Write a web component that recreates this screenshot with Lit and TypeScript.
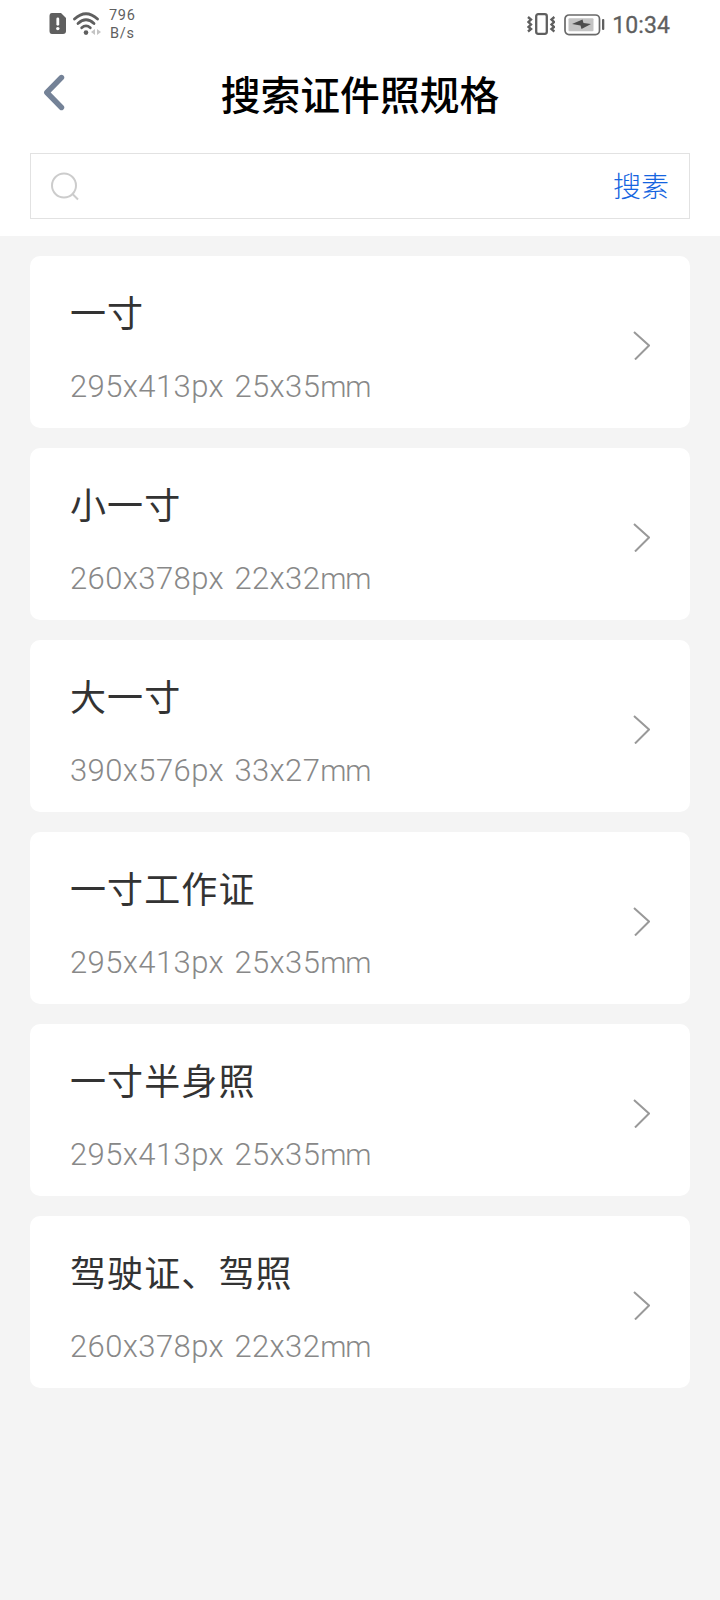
import { LitElement, html, css } from "lit";
import { customElement, property } from "lit/decorators.js";

interface PhotoSpec {
  name: string;
  size: string;
}

const SPECS: PhotoSpec[] = [
  { name: "一寸", size: "295x413px 25x35" },
  { name: "小一寸", size: "260x378px 22x32" },
  { name: "大一寸", size: "390x576px 33x27" },
  { name: "一寸工作证", size: "295x413px 25x35" },
  { name: "一寸半身照", size: "295x413px 25x35" },
  { name: "驾驶证、驾照", size: "260x378px 22x32" },
];

@customElement("status-bar")
export class StatusBar extends LitElement {
  static styles = css`
    :host {
      display: flex;
      justify-content: space-between;
      height: 50px;
      padding: 0 50px 0 49px;
      box-sizing: border-box;
      font-family: Roboto, sans-serif;
      color: #5f5f5f;
    }
    .side {
      display: flex;
      align-items: flex-start;
    }
    .sim { margin-top: 12px; }
    .wifi { margin: 12px 0 0 6px; }
    .rate {
      margin: 7px 0 0 8px;
      font-size: 14.5px;
      line-height: 18px;
      letter-spacing: 0.7px;
      text-align: center;
    }
    .vibrate { margin-top: 13px; }
    .battery { margin: 14px 0 0 9px; }
    .time {
      margin: 11px 0 0 7px;
      font-size: 23px;
      line-height: 29px;
      letter-spacing: 0.1px;
      -webkit-text-stroke: 0.3px #5f5f5f;
    }
  `;

  render() {
    return html`
      <div class="side">
        <svg class="sim" width="18" height="23" viewBox="0 0 18 23">
          <path d="M3 1H12L17 6V19Q17 22 14 22H3Q.5 22 .5 19V4Q.5 1 3 1Z" fill="#5f5f5f" />
          <path d="M8.8 6.8V12.3" stroke="#fff" stroke-width="2.8" stroke-linecap="round" />
          <circle cx="8.8" cy="16.6" r="1.7" fill="#fff" />
        </svg>
        <svg class="wifi" width="28" height="24" viewBox="0 0 28 24">
          <g fill="none" stroke="#5f5f5f" stroke-width="2.8" stroke-linecap="round">
            <path d="M1.5 7Q13 -3.5 24.5 7" />
            <path d="M5 11.5Q13 4 21 11.5" />
            <path d="M8.7 15.8Q13 12 17.3 15.8" />
          </g>
          <circle cx="13" cy="20.6" r="2.3" fill="#5f5f5f" />
          <path d="M22 17V23L18 20ZM24 17V23L28 20Z" fill="#c4c4c4" />
        </svg>
        <div class="rate">796<br />B/s</div>
      </div>
      <div class="side">
        <svg class="vibrate" width="28" height="22" viewBox="0 0 28 22">
          <rect x="9.2" y="1.2" width="10.6" height="19.6" rx="2" fill="none" stroke="#5f5f5f" stroke-width="2.3" />
          <g fill="none" stroke="#5f5f5f" stroke-width="2.4">
            <path d="M1 4L4 6.5L1.5 9L4 11.5L1.5 14L4 16L1 18.5" />
            <path d="M27.4 4L24.5 6.5L27 9L24.5 11.5L27 14L24.5 16L27.4 18.5" />
          </g>
        </svg>
        <svg class="battery" width="41" height="22" viewBox="0 0 41 22">
          <rect x="1" y="1" width="34.5" height="19.6" rx="4" fill="none" stroke="#6a6a6a" stroke-width="1.7" />
          <rect x="4.5" y="4.3" width="25" height="13" rx="1" fill="#c4c4c4" />
          <path d="M8 10L18.5 5.5L19.5 9L27 10L17.5 15L16.5 11.5Z" fill="#4c4c4c" />
          <rect x="38" y="5" width="2.3" height="11" rx="1" fill="#5f5f5f" />
        </svg>
        <div class="time">10:34</div>
      </div>
    `;
  }
}

@customElement("spec-card")
export class SpecCard extends LitElement {
  @property() name = "";
  @property() size = "";

  static styles = css`
    :host {
      display: flex;
      align-items: center;
      justify-content: space-between;
      height: 172px;
      padding: 0 40px;
      box-sizing: border-box;
      border-radius: 10px;
      background: #fff;
    }
    .info {
      display: flex;
      flex-direction: column;
      gap: 28px;
      padding-top: 13px;
    }
    .name {
      font: 400 36px/48px "Noto Sans CJK SC", sans-serif;
      letter-spacing: 1.1px;
      color: #333;
    }
    .size {
      font: 300 31px/48px Roboto, sans-serif;
      letter-spacing: 0.42px;
      word-spacing: 2.3px;
      color: #888;
    }
    .unit {
      font-size: 29.5px;
      letter-spacing: -1.2px;
    }
    .arrow { margin-top: 6px; }
  `;

  render() {
    return html`
      <div class="info">
        <div class="name">${this.name}</div>
        <div class="size">${this.size}<span class="unit">mm</span></div>
      </div>
      <svg class="arrow" width="17" height="29" viewBox="0 0 17 29">
        <path d="M1 1L16 14.5L2 28.5" fill="none" stroke="#999" stroke-width="2" />
      </svg>
    `;
  }
}

@customElement("app-root")
export class AppRoot extends LitElement {
  static styles = css`
    :host {
      display: block;
      min-height: 1600px;
      background: #f4f4f4;
      font-family: "Noto Sans CJK SC", sans-serif;
    }
    .top {
      height: 236px;
      background: #fff;
    }
    .nav {
      display: grid;
      grid-template-columns: 120px 1fr 120px;
      align-items: center;
      height: 88px;
    }
    .back { margin: 0 0 4px 43px; }
    .title {
      margin: 0 0 3px;
      text-align: center;
      font-size: 39.8px;
      line-height: 56px;
      font-weight: 500;
      color: #000;
    }
    .search {
      display: flex;
      align-items: center;
      justify-content: space-between;
      height: 66px;
      margin: 15px 30px 0;
      padding: 0 20px;
      box-sizing: border-box;
      border: 1px solid #e2e2e2;
    }
    .submit {
      margin-bottom: 3px;
      font-size: 28px;
      line-height: 40px;
      font-weight: 300;
      color: #1464e0;
    }
    .list {
      display: flex;
      flex-direction: column;
      gap: 20px;
      padding: 20px 30px;
    }
  `;

  render() {
    return html`
      <div class="top">
        <status-bar></status-bar>
        <div class="nav">
          <svg class="back" width="23" height="37" viewBox="0 0 23 37">
            <path d="M18.5 3.5L3.8 18.5L18.5 33.5" fill="none" stroke="#748297" stroke-width="5.4" stroke-linecap="round" stroke-linejoin="round" />
          </svg>
          <h1 class="title">搜索证件照规格</h1>
        </div>
        <div class="search">
          <svg width="29" height="29" viewBox="0 0 29 29">
            <circle cx="13" cy="13.5" r="12" fill="none" stroke="#ccc" stroke-width="2" />
            <path d="M21.5 22L27 27.5" stroke="#ccc" stroke-width="2" />
          </svg>
          <span class="submit">搜素</span>
        </div>
      </div>
      <div class="list">
        ${SPECS.map((s) => html`<spec-card .name=${s.name} .size=${s.size}></spec-card>`)}
      </div>
    `;
  }
}
